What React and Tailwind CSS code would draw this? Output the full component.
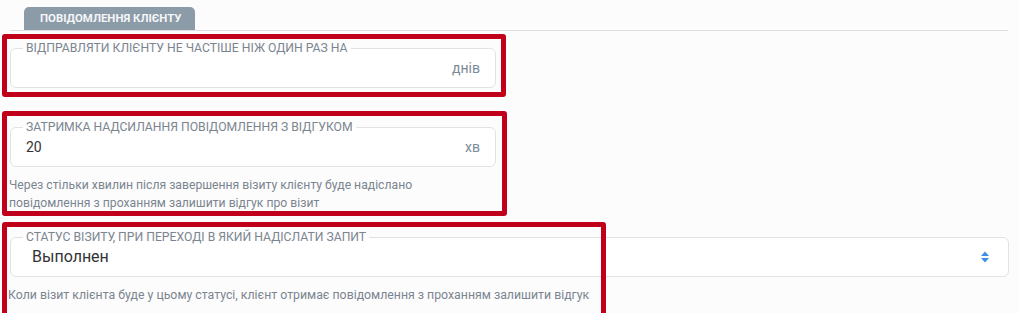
import React from 'react'

const font = { fontFamily: 'Roboto, "Noto Sans", sans-serif' }

function Field({ label, width, children }) {
  return (
    <fieldset className={`${width} border border-[#e2e2e2] rounded-[6px] bg-white px-[14px] pb-[6px] m-0 min-w-0`}>
      <legend className="ml-[-2px] px-[3px] text-[12.2px] leading-[14px] uppercase text-[#7b8590]">{label}</legend>
      <div className="h-[26px] flex items-center justify-between">{children}</div>
    </fieldset>
  )
}

function Spinner() {
  return (
    <svg width="8" height="12" viewBox="0 0 8 12" className="shrink-0">
      <path d="M0 5 L4 0.5 L8 5 Z" fill="#3a8ee8" />
      <path d="M0 7 L4 11.5 L8 7 Z" fill="#3a8ee8" />
    </svg>
  )
}

export default function App() {
  return (
    <div style={font} className="relative w-[1019px] h-[313px] overflow-hidden bg-[#fcfcfc]">
      {/* tabs */}
      <div className="ml-[10px] mr-[11px] pt-[7px] border-b border-[#dddfe4]">
        <div className="ml-[14px] w-[171px] h-[23px] rounded-t-[5px] bg-[#8c9ba8] flex items-center pl-[16px] text-[11.4px] font-bold text-[#f4f6f8]">
          ПОВІДОМЛЕННЯ КЛІЄНТУ
        </div>
      </div>

      <div className="px-[10px] pt-[10px]">
        <Field label="Відправляти клієнту не частіше ніж один раз на" width="w-[486px]">
          <span />
          <span className="text-[14px] text-[#7b8a99] mr-[1px]">днів</span>
        </Field>

        <div className="mt-[32px]">
          <Field label="Затримка надсилання повідомлення з відгуком" width="w-[486px]">
            <span className="text-[14px] text-[#333] ml-[1px]">20</span>
            <span className="text-[14px] text-[#7b8a99] mr-[1px]">хв</span>
          </Field>
          <p className="mt-[9px] ml-[-1px] text-[12.2px] leading-[18px] text-[#7b8590]">
            Через стільки хвилин після завершення візиту клієнту буде надіслано
            <br />
            повідомлення з проханням залишити відгук про візит
          </p>
        </div>

        <div className="mt-[18px]">
          <Field label="Статус візиту, при переході в який надіслати запит" width="w-[999px]">
            <span className="text-[16px] text-[#333] ml-[7px]">Выполнен</span>
            <span className="mr-[5px]"><Spinner /></span>
          </Field>
          <p className="mt-[9px] ml-[-2px] text-[12.3px] leading-[18px] text-[#7b8590]">
            Коли візит клієнта буде у цьому статусі, клієнт отримає повідомлення з проханням залишити відгук
          </p>
        </div>
      </div>

      {/* annotation boxes */}
      <div className="absolute left-[2px] top-[34px] w-[504px] h-[63px] border-[5px] border-[#c0001a] rounded-[3px]" />
      <div className="absolute left-[2px] top-[111px] w-[505px] h-[105px] border-[5px] border-[#c0001a] rounded-[3px]" />
      <div className="absolute left-[2px] top-[222px] w-[604px] h-[96px] border-[5px] border-[#c0001a] rounded-[3px]" />
    </div>
  )
}
